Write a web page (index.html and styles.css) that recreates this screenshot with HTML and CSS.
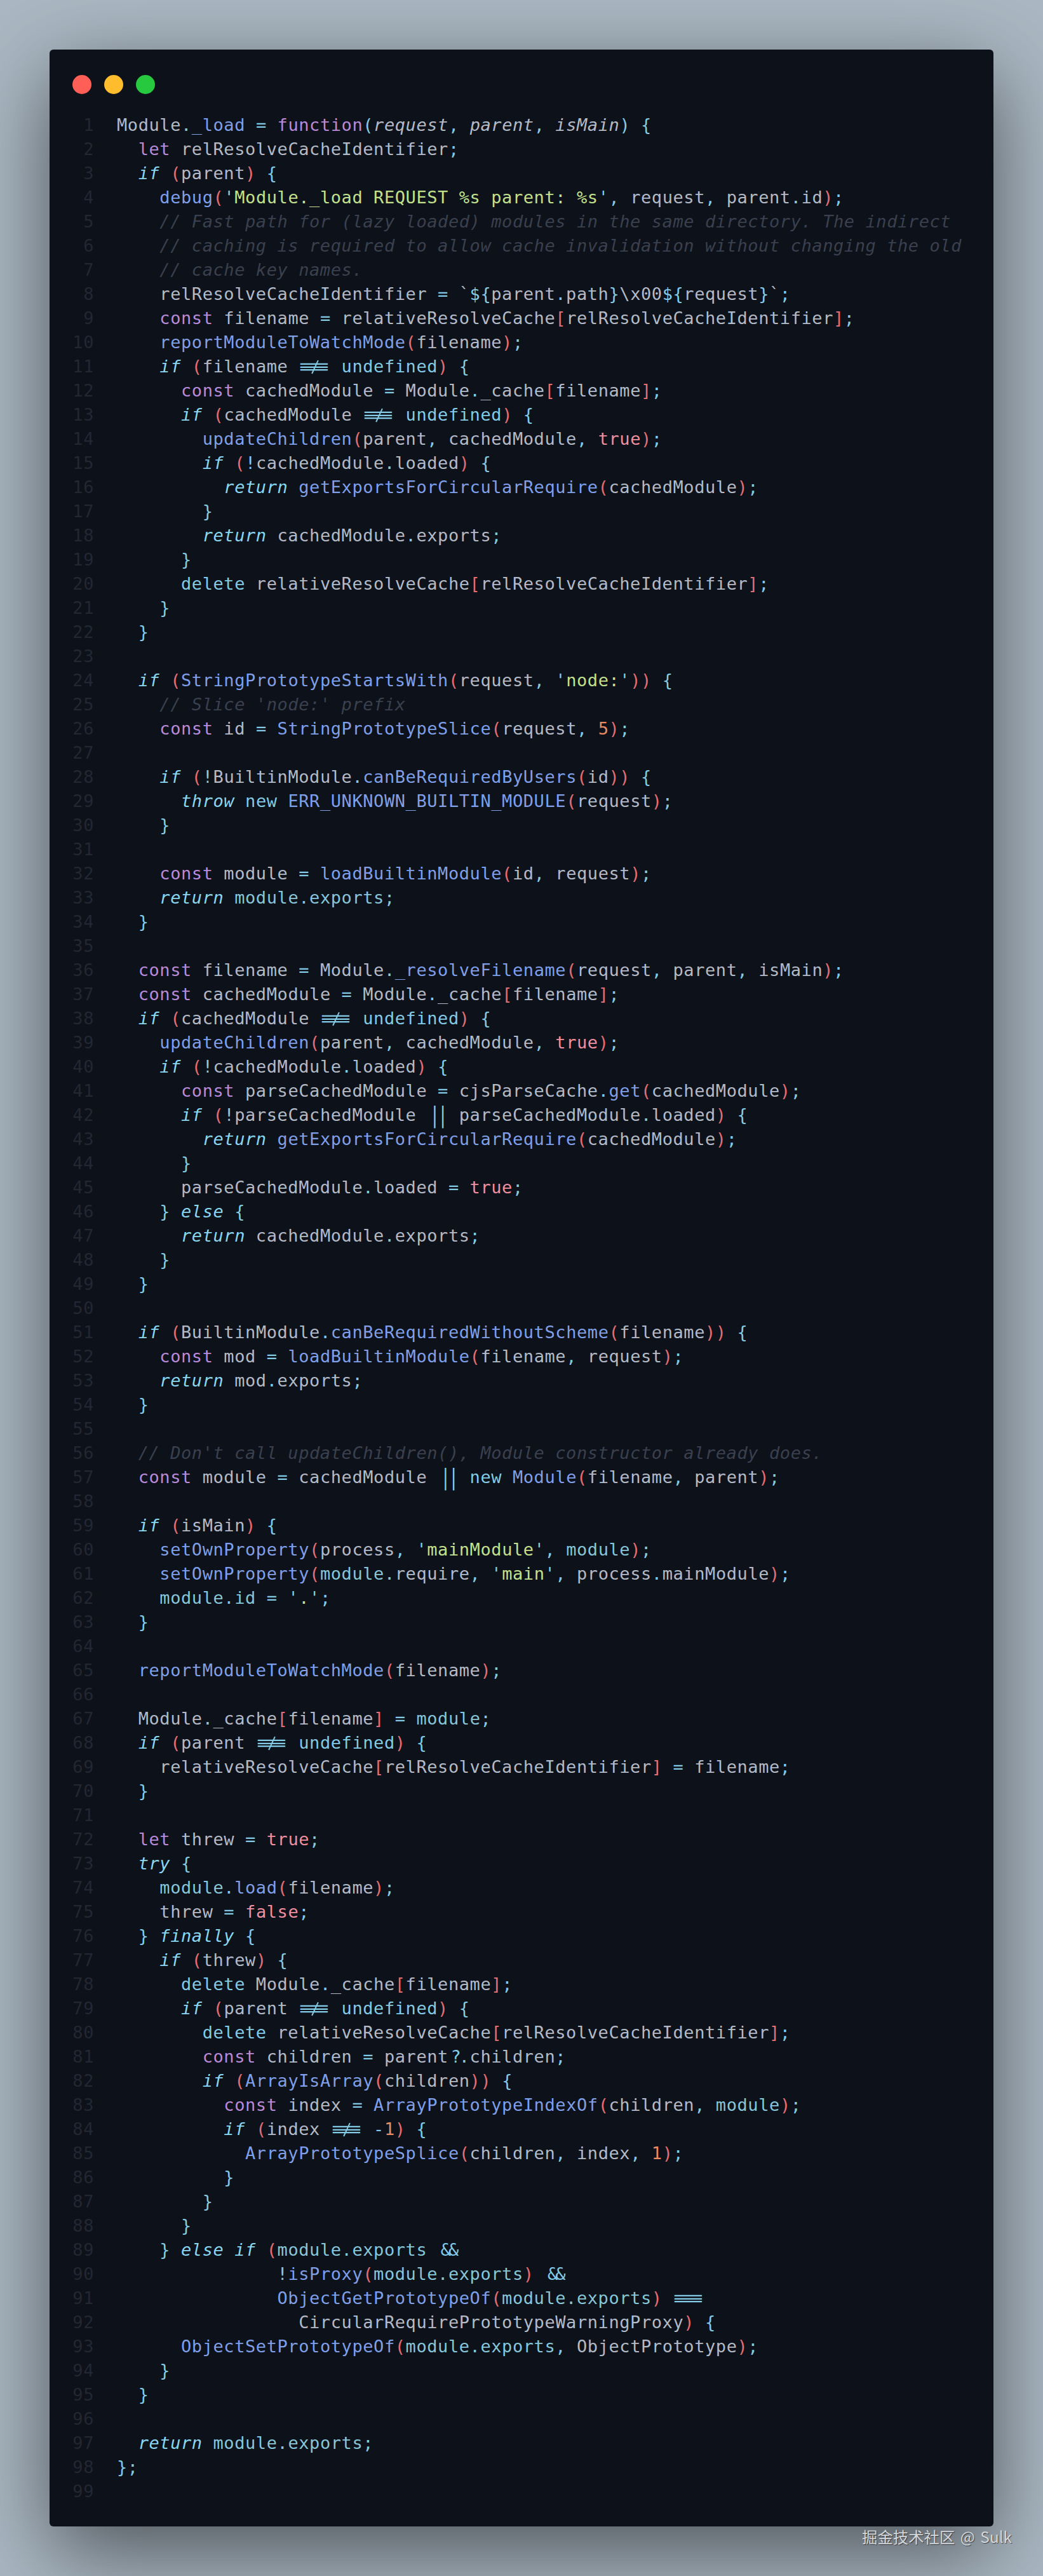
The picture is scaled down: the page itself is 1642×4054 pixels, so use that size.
FILE: index.html
```html
<!DOCTYPE html>
<html lang="en">
<head>
<meta charset="utf-8">
<title>Module._load</title>
<link rel="stylesheet" href="styles.css">
</head>
<body>
<main class="window">
<div class="dots"><span class="dot red"></span><span class="dot yellow"></span><span class="dot green"></span></div>
<div class="editor">
<div class="line"><span class="ln">1</span><span class="code">Module<span class="p">.</span><span class="f">_load</span> <span class="p">=</span> <span class="k">function</span><span class="p">(</span><span class="a">request</span><span class="p">,</span> <span class="a">parent</span><span class="p">,</span> <span class="a">isMain</span><span class="p">)</span> <span class="p">{</span></span></div>
<div class="line"><span class="ln">2</span><span class="code">  <span class="k">let</span> relResolveCacheIdentifier<span class="p">;</span></span></div>
<div class="line"><span class="ln">3</span><span class="code">  <span class="i">if</span> <span class="r">(</span>parent<span class="r">)</span> <span class="p">{</span></span></div>
<div class="line"><span class="ln">4</span><span class="code">    <span class="f">debug</span><span class="r">(</span><span class="p">'</span><span class="s">Module._load REQUEST %s parent: %s</span><span class="p">'</span><span class="p">,</span> request<span class="p">,</span> parent<span class="p">.</span>id<span class="r">)</span><span class="p">;</span></span></div>
<div class="line"><span class="ln">5</span><span class="code">    <span class="c">// Fast path for (lazy loaded) modules in the same directory. The indirect</span></span></div>
<div class="line"><span class="ln">6</span><span class="code">    <span class="c">// caching is required to allow cache invalidation without changing the old</span></span></div>
<div class="line"><span class="ln">7</span><span class="code">    <span class="c">// cache key names.</span></span></div>
<div class="line"><span class="ln">8</span><span class="code">    relResolveCacheIdentifier <span class="p">=</span> `<span class="p">${</span>parent<span class="p">.</span>path<span class="p">}</span>\x00<span class="p">${</span>request<span class="p">}</span>`<span class="p">;</span></span></div>
<div class="line"><span class="ln">9</span><span class="code">    <span class="k">const</span> filename <span class="p">=</span> relativeResolveCache<span class="r">[</span>relResolveCacheIdentifier<span class="r">]</span><span class="p">;</span></span></div>
<div class="line"><span class="ln">10</span><span class="code">    <span class="f">reportModuleToWatchMode</span><span class="r">(</span>filename<span class="r">)</span><span class="p">;</span></span></div>
<div class="line"><span class="ln">11</span><span class="code">    <span class="i">if</span> <span class="r">(</span>filename <span class="ne"><span class="bars">≡</span></span> <span class="p">undefined</span><span class="r">)</span> <span class="p">{</span></span></div>
<div class="line"><span class="ln">12</span><span class="code">      <span class="k">const</span> cachedModule <span class="p">=</span> Module<span class="p">.</span>_cache<span class="r">[</span>filename<span class="r">]</span><span class="p">;</span></span></div>
<div class="line"><span class="ln">13</span><span class="code">      <span class="i">if</span> <span class="r">(</span>cachedModule <span class="ne"><span class="bars">≡</span></span> <span class="p">undefined</span><span class="r">)</span> <span class="p">{</span></span></div>
<div class="line"><span class="ln">14</span><span class="code">        <span class="f">updateChildren</span><span class="r">(</span>parent<span class="p">,</span> cachedModule<span class="p">,</span> <span class="b">true</span><span class="r">)</span><span class="p">;</span></span></div>
<div class="line"><span class="ln">15</span><span class="code">        <span class="i">if</span> <span class="r">(</span><span class="p">!</span>cachedModule<span class="p">.</span>loaded<span class="r">)</span> <span class="p">{</span></span></div>
<div class="line"><span class="ln">16</span><span class="code">          <span class="i">return</span> <span class="f">getExportsForCircularRequire</span><span class="r">(</span>cachedModule<span class="r">)</span><span class="p">;</span></span></div>
<div class="line"><span class="ln">17</span><span class="code">        <span class="p">}</span></span></div>
<div class="line"><span class="ln">18</span><span class="code">        <span class="i">return</span> cachedModule<span class="p">.</span>exports<span class="p">;</span></span></div>
<div class="line"><span class="ln">19</span><span class="code">      <span class="p">}</span></span></div>
<div class="line"><span class="ln">20</span><span class="code">      <span class="p">delete</span> relativeResolveCache<span class="r">[</span>relResolveCacheIdentifier<span class="r">]</span><span class="p">;</span></span></div>
<div class="line"><span class="ln">21</span><span class="code">    <span class="p">}</span></span></div>
<div class="line"><span class="ln">22</span><span class="code">  <span class="p">}</span></span></div>
<div class="line"><span class="ln">23</span><span class="code"></span></div>
<div class="line"><span class="ln">24</span><span class="code">  <span class="i">if</span> <span class="r">(</span><span class="f">StringPrototypeStartsWith</span><span class="r">(</span>request<span class="p">,</span> <span class="p">'</span><span class="s">node:</span><span class="p">'</span><span class="r">))</span> <span class="p">{</span></span></div>
<div class="line"><span class="ln">25</span><span class="code">    <span class="c">// Slice 'node:' prefix</span></span></div>
<div class="line"><span class="ln">26</span><span class="code">    <span class="k">const</span> id <span class="p">=</span> <span class="f">StringPrototypeSlice</span><span class="r">(</span>request<span class="p">,</span> <span class="n">5</span><span class="r">)</span><span class="p">;</span></span></div>
<div class="line"><span class="ln">27</span><span class="code"></span></div>
<div class="line"><span class="ln">28</span><span class="code">    <span class="i">if</span> <span class="r">(</span><span class="p">!</span>BuiltinModule<span class="p">.</span><span class="f">canBeRequiredByUsers</span><span class="r">(</span>id<span class="r">))</span> <span class="p">{</span></span></div>
<div class="line"><span class="ln">29</span><span class="code">      <span class="i">throw</span> <span class="p">new</span> <span class="f">ERR_UNKNOWN_BUILTIN_MODULE</span><span class="r">(</span>request<span class="r">)</span><span class="p">;</span></span></div>
<div class="line"><span class="ln">30</span><span class="code">    <span class="p">}</span></span></div>
<div class="line"><span class="ln">31</span><span class="code"></span></div>
<div class="line"><span class="ln">32</span><span class="code">    <span class="k">const</span> module <span class="p">=</span> <span class="f">loadBuiltinModule</span><span class="r">(</span>id<span class="p">,</span> request<span class="r">)</span><span class="p">;</span></span></div>
<div class="line"><span class="ln">33</span><span class="code">    <span class="i">return</span> <span class="m">module.exports</span><span class="p">;</span></span></div>
<div class="line"><span class="ln">34</span><span class="code">  <span class="p">}</span></span></div>
<div class="line"><span class="ln">35</span><span class="code"></span></div>
<div class="line"><span class="ln">36</span><span class="code">  <span class="k">const</span> filename <span class="p">=</span> Module<span class="p">.</span><span class="f">_resolveFilename</span><span class="r">(</span>request<span class="p">,</span> parent<span class="p">,</span> isMain<span class="r">)</span><span class="p">;</span></span></div>
<div class="line"><span class="ln">37</span><span class="code">  <span class="k">const</span> cachedModule <span class="p">=</span> Module<span class="p">.</span>_cache<span class="r">[</span>filename<span class="r">]</span><span class="p">;</span></span></div>
<div class="line"><span class="ln">38</span><span class="code">  <span class="i">if</span> <span class="r">(</span>cachedModule <span class="ne"><span class="bars">≡</span></span> <span class="p">undefined</span><span class="r">)</span> <span class="p">{</span></span></div>
<div class="line"><span class="ln">39</span><span class="code">    <span class="f">updateChildren</span><span class="r">(</span>parent<span class="p">,</span> cachedModule<span class="p">,</span> <span class="b">true</span><span class="r">)</span><span class="p">;</span></span></div>
<div class="line"><span class="ln">40</span><span class="code">    <span class="i">if</span> <span class="r">(</span><span class="p">!</span>cachedModule<span class="p">.</span>loaded<span class="r">)</span> <span class="p">{</span></span></div>
<div class="line"><span class="ln">41</span><span class="code">      <span class="k">const</span> parseCachedModule <span class="p">=</span> cjsParseCache<span class="p">.</span><span class="f">get</span><span class="r">(</span>cachedModule<span class="r">)</span><span class="p">;</span></span></div>
<div class="line"><span class="ln">42</span><span class="code">      <span class="i">if</span> <span class="r">(</span><span class="p">!</span>parseCachedModule <span class="or">||</span> parseCachedModule<span class="p">.</span>loaded<span class="r">)</span> <span class="p">{</span></span></div>
<div class="line"><span class="ln">43</span><span class="code">        <span class="i">return</span> <span class="f">getExportsForCircularRequire</span><span class="r">(</span>cachedModule<span class="r">)</span><span class="p">;</span></span></div>
<div class="line"><span class="ln">44</span><span class="code">      <span class="p">}</span></span></div>
<div class="line"><span class="ln">45</span><span class="code">      parseCachedModule<span class="p">.</span>loaded <span class="p">=</span> <span class="b">true</span><span class="p">;</span></span></div>
<div class="line"><span class="ln">46</span><span class="code">    <span class="p">}</span> <span class="i">else</span> <span class="p">{</span></span></div>
<div class="line"><span class="ln">47</span><span class="code">      <span class="i">return</span> cachedModule<span class="p">.</span>exports<span class="p">;</span></span></div>
<div class="line"><span class="ln">48</span><span class="code">    <span class="p">}</span></span></div>
<div class="line"><span class="ln">49</span><span class="code">  <span class="p">}</span></span></div>
<div class="line"><span class="ln">50</span><span class="code"></span></div>
<div class="line"><span class="ln">51</span><span class="code">  <span class="i">if</span> <span class="r">(</span>BuiltinModule<span class="p">.</span><span class="f">canBeRequiredWithoutScheme</span><span class="r">(</span>filename<span class="r">))</span> <span class="p">{</span></span></div>
<div class="line"><span class="ln">52</span><span class="code">    <span class="k">const</span> mod <span class="p">=</span> <span class="f">loadBuiltinModule</span><span class="r">(</span>filename<span class="p">,</span> request<span class="r">)</span><span class="p">;</span></span></div>
<div class="line"><span class="ln">53</span><span class="code">    <span class="i">return</span> mod<span class="p">.</span>exports<span class="p">;</span></span></div>
<div class="line"><span class="ln">54</span><span class="code">  <span class="p">}</span></span></div>
<div class="line"><span class="ln">55</span><span class="code"></span></div>
<div class="line"><span class="ln">56</span><span class="code">  <span class="c">// Don't call updateChildren(), Module constructor already does.</span></span></div>
<div class="line"><span class="ln">57</span><span class="code">  <span class="k">const</span> module <span class="p">=</span> cachedModule <span class="or">||</span> <span class="p">new</span> <span class="f">Module</span><span class="r">(</span>filename<span class="p">,</span> parent<span class="r">)</span><span class="p">;</span></span></div>
<div class="line"><span class="ln">58</span><span class="code"></span></div>
<div class="line"><span class="ln">59</span><span class="code">  <span class="i">if</span> <span class="r">(</span>isMain<span class="r">)</span> <span class="p">{</span></span></div>
<div class="line"><span class="ln">60</span><span class="code">    <span class="f">setOwnProperty</span><span class="r">(</span>process<span class="p">,</span> <span class="p">'</span><span class="s">mainModule</span><span class="p">'</span><span class="p">,</span> <span class="m">module</span><span class="r">)</span><span class="p">;</span></span></div>
<div class="line"><span class="ln">61</span><span class="code">    <span class="f">setOwnProperty</span><span class="r">(</span><span class="m">module</span><span class="p">.</span>require<span class="p">,</span> <span class="p">'</span><span class="s">main</span><span class="p">'</span><span class="p">,</span> process<span class="p">.</span>mainModule<span class="r">)</span><span class="p">;</span></span></div>
<div class="line"><span class="ln">62</span><span class="code">    <span class="m">module.id</span> <span class="p">=</span> <span class="p">'</span><span class="s">.</span><span class="p">'</span><span class="p">;</span></span></div>
<div class="line"><span class="ln">63</span><span class="code">  <span class="p">}</span></span></div>
<div class="line"><span class="ln">64</span><span class="code"></span></div>
<div class="line"><span class="ln">65</span><span class="code">  <span class="f">reportModuleToWatchMode</span><span class="r">(</span>filename<span class="r">)</span><span class="p">;</span></span></div>
<div class="line"><span class="ln">66</span><span class="code"></span></div>
<div class="line"><span class="ln">67</span><span class="code">  Module<span class="p">.</span>_cache<span class="r">[</span>filename<span class="r">]</span> <span class="p">=</span> <span class="m">module</span><span class="p">;</span></span></div>
<div class="line"><span class="ln">68</span><span class="code">  <span class="i">if</span> <span class="r">(</span>parent <span class="ne"><span class="bars">≡</span></span> <span class="p">undefined</span><span class="r">)</span> <span class="p">{</span></span></div>
<div class="line"><span class="ln">69</span><span class="code">    relativeResolveCache<span class="r">[</span>relResolveCacheIdentifier<span class="r">]</span> <span class="p">=</span> filename<span class="p">;</span></span></div>
<div class="line"><span class="ln">70</span><span class="code">  <span class="p">}</span></span></div>
<div class="line"><span class="ln">71</span><span class="code"></span></div>
<div class="line"><span class="ln">72</span><span class="code">  <span class="k">let</span> threw <span class="p">=</span> <span class="b">true</span><span class="p">;</span></span></div>
<div class="line"><span class="ln">73</span><span class="code">  <span class="i">try</span> <span class="p">{</span></span></div>
<div class="line"><span class="ln">74</span><span class="code">    <span class="m">module</span><span class="p">.</span><span class="f">load</span><span class="r">(</span>filename<span class="r">)</span><span class="p">;</span></span></div>
<div class="line"><span class="ln">75</span><span class="code">    threw <span class="p">=</span> <span class="b">false</span><span class="p">;</span></span></div>
<div class="line"><span class="ln">76</span><span class="code">  <span class="p">}</span> <span class="i">finally</span> <span class="p">{</span></span></div>
<div class="line"><span class="ln">77</span><span class="code">    <span class="i">if</span> <span class="r">(</span>threw<span class="r">)</span> <span class="p">{</span></span></div>
<div class="line"><span class="ln">78</span><span class="code">      <span class="p">delete</span> Module<span class="p">.</span>_cache<span class="r">[</span>filename<span class="r">]</span><span class="p">;</span></span></div>
<div class="line"><span class="ln">79</span><span class="code">      <span class="i">if</span> <span class="r">(</span>parent <span class="ne"><span class="bars">≡</span></span> <span class="p">undefined</span><span class="r">)</span> <span class="p">{</span></span></div>
<div class="line"><span class="ln">80</span><span class="code">        <span class="p">delete</span> relativeResolveCache<span class="r">[</span>relResolveCacheIdentifier<span class="r">]</span><span class="p">;</span></span></div>
<div class="line"><span class="ln">81</span><span class="code">        <span class="k">const</span> children <span class="p">=</span> parent<span class="opt">?.</span>children<span class="p">;</span></span></div>
<div class="line"><span class="ln">82</span><span class="code">        <span class="i">if</span> <span class="r">(</span><span class="f">ArrayIsArray</span><span class="r">(</span>children<span class="r">))</span> <span class="p">{</span></span></div>
<div class="line"><span class="ln">83</span><span class="code">          <span class="k">const</span> index <span class="p">=</span> <span class="f">ArrayPrototypeIndexOf</span><span class="r">(</span>children<span class="p">,</span> <span class="m">module</span><span class="r">)</span><span class="p">;</span></span></div>
<div class="line"><span class="ln">84</span><span class="code">          <span class="i">if</span> <span class="r">(</span>index <span class="ne"><span class="bars">≡</span></span> <span class="p">-</span><span class="n">1</span><span class="r">)</span> <span class="p">{</span></span></div>
<div class="line"><span class="ln">85</span><span class="code">            <span class="f">ArrayPrototypeSplice</span><span class="r">(</span>children<span class="p">,</span> index<span class="p">,</span> <span class="n">1</span><span class="r">)</span><span class="p">;</span></span></div>
<div class="line"><span class="ln">86</span><span class="code">          <span class="p">}</span></span></div>
<div class="line"><span class="ln">87</span><span class="code">        <span class="p">}</span></span></div>
<div class="line"><span class="ln">88</span><span class="code">      <span class="p">}</span></span></div>
<div class="line"><span class="ln">89</span><span class="code">    <span class="p">}</span> <span class="i">else</span> <span class="i">if</span> <span class="r">(</span><span class="m">module.exports</span> <span class="and">&amp;&amp;</span></span></div>
<div class="line"><span class="ln">90</span><span class="code">               <span class="p">!</span><span class="f">isProxy</span><span class="r">(</span><span class="m">module.exports</span><span class="r">)</span> <span class="and">&amp;&amp;</span></span></div>
<div class="line"><span class="ln">91</span><span class="code">               <span class="f">ObjectGetPrototypeOf</span><span class="r">(</span><span class="m">module.exports</span><span class="r">)</span> <span class="eq"><span class="bars">≡</span></span></span></div>
<div class="line"><span class="ln">92</span><span class="code">                 CircularRequirePrototypeWarningProxy<span class="r">)</span> <span class="p">{</span></span></div>
<div class="line"><span class="ln">93</span><span class="code">      <span class="f">ObjectSetPrototypeOf</span><span class="r">(</span><span class="m">module.exports</span><span class="p">,</span> ObjectPrototype<span class="r">)</span><span class="p">;</span></span></div>
<div class="line"><span class="ln">94</span><span class="code">    <span class="p">}</span></span></div>
<div class="line"><span class="ln">95</span><span class="code">  <span class="p">}</span></span></div>
<div class="line"><span class="ln">96</span><span class="code"></span></div>
<div class="line"><span class="ln">97</span><span class="code">  <span class="i">return</span> <span class="m">module.exports</span><span class="p">;</span></span></div>
<div class="line"><span class="ln">98</span><span class="code"><span class="p">};</span></span></div>
<div class="line"><span class="ln">99</span><span class="code"></span></div>
</div>
</main>
<div class="watermark">掘金技术社区 @ Sulk</div>
</body>
</html>
```

FILE: styles.css
```css
* { box-sizing: border-box; }
html, body { margin: 0; padding: 0; }
body {
  position: relative;
  width: 1642px;
  height: 4054px;
  padding: 78px;
  overflow: hidden;
  background: #abb8c3;
}
.window {
  height: 3898px;
  padding: 40px 36px 36px;
  border-radius: 6px;
  background: #0d111a;
  box-shadow: 0 40px 136px rgba(0, 0, 0, 0.55);
}
.dots { display: flex; gap: 20px; height: 30px; margin-bottom: 30px; }
.dot { width: 30px; height: 30px; border-radius: 50%; }
.red { background: #ff5f56; }
.yellow { background: #ffbd2e; }
.green { background: #27c93f; }
.editor {
  font-family: "DejaVu Sans Mono", "Liberation Mono", monospace;
  font-size: 27px;
  letter-spacing: 0.58px;
  color: #b3bac6;
}
.line { display: flex; height: 38px; line-height: 38px; white-space: pre; }
.ln { width: 34px; margin-right: 36px; text-align: right; color: #222732; flex: none; }
.code { flex: none; }
.k { color: #b88ad8; }
.i { color: #89d6f0; font-style: italic; }
.a { font-style: italic; }
.f { color: #7f9fe8; }
.p { color: #83cbe4; }
.m { color: #86c6d8; }
.r { color: #e26d72; }
.s { color: #c3e08d; }
.n { color: #ea8a60; }
.b { color: #ef8f9f; }
.c { color: #3a404d; font-style: italic; }
.ne, .eq {
  position: relative;
  display: inline-block;
  width: 50.5px;
  text-align: center;
  color: #83cbe4;
}
.bars { display: inline-block; transform: scaleX(3.1); }
.ne::after {
  content: "";
  position: absolute;
  left: 24.5px;
  top: 8px;
  width: 1.6px;
  height: 23px;
  background: #83cbe4;
  transform: rotate(25deg);
}
.or {
  display: inline-block;
  width: 33.67px;
  text-align: center;
  color: #83cbe4;
  letter-spacing: -3.5px;
  transform: scaleY(1.3);
}
.and {
  display: inline-block;
  width: 33.67px;
  text-align: center;
  color: #83cbe4;
  letter-spacing: -4px;
}
.opt {
  display: inline-block;
  width: 33.67px;
  text-align: center;
  color: #83cbe4;
  letter-spacing: -3px;
}
.watermark {
  position: absolute;
  top: 3974px;
  left: 1357px;
  font-family: "Noto Sans CJK SC", "Noto Sans", sans-serif;
  font-size: 24.4px;
  line-height: 36px;
  word-spacing: 3px;
  white-space: nowrap;
  color: #d4d7da;
  text-shadow: 1px 1px 1px rgba(0, 0, 0, 0.55);
}
```
